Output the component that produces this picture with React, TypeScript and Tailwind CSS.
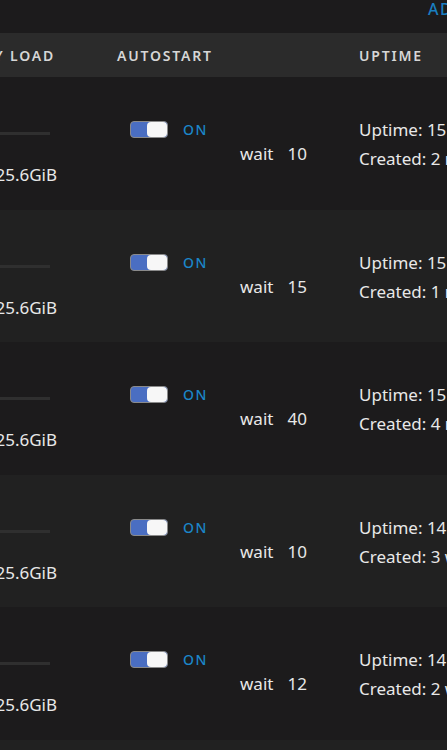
import React from "react";

type Vm = {
  wait: number;
  uptime: string;
  created: string;
};

const vms: Vm[] = [
  { wait: 10, uptime: "15 days 4 hours", created: "2 months ago" },
  { wait: 15, uptime: "15 days 4 hours", created: "1 month ago" },
  { wait: 40, uptime: "15 days 3 hours", created: "4 months ago" },
  { wait: 10, uptime: "14 days 22 hours", created: "3 weeks ago" },
  { wait: 12, uptime: "14 days 21 hours", created: "2 weeks ago" },
];

function Toggle() {
  return (
    <div className="flex h-[17px] w-[38px] items-center rounded-[4px] border border-[#8a8a8a] bg-[#4a6ec2]">
      <div className="ml-auto h-[15px] w-[20px] rounded-[4px] bg-[#f7f7f7]" />
    </div>
  );
}

function Row({ vm, index }: { vm: Vm; index: number }) {
  const bg = index % 2 === 0 ? "bg-[#1c1b1c]" : "bg-[#212121]";
  return (
    <div className={`flex h-[132.5px] ${bg}`}>
      {/* memory load */}
      <div className="w-[117px] shrink-0 pr-[61px]">
        <div className="flex justify-end pt-[55px]">
          <div className="mr-[6px] h-[3px] w-[120px] shrink-0 bg-[#2f2f2f]" />
        </div>
        <div className="mt-[30px] flex justify-end whitespace-nowrap text-[17px] leading-[20px] text-[#e8e8e8]">
          <span className="-mr-[1px]">4.1GiB / 25.6GiB</span>
        </div>
      </div>
      {/* autostart */}
      <div className="flex w-[242px] shrink-0">
        <div className="w-[123px] shrink-0 pl-[13px] pt-[42px]">
          <div className="flex items-center gap-[15px]">
            <Toggle />
            <span className="text-[14px] font-medium tracking-[1.5px] text-[#1b86c9]">
              ON
            </span>
          </div>
        </div>
        <div className="flex pt-[67px] text-[17px] leading-[20px] text-[#e8e8e8]">
          <span>wait</span>
          <span className="ml-[14px]">{vm.wait}</span>
        </div>
      </div>
      {/* uptime */}
      <div className="min-w-0 flex-1 overflow-hidden whitespace-nowrap pt-[38px] text-[17px] leading-[29px] text-[#e8e8e8]">
        <div>Uptime: {vm.uptime}</div>
        <div>Created: {vm.created}</div>
      </div>
    </div>
  );
}

export default function App() {
  return (
    <div
      className="h-[750px] w-[447px] overflow-hidden bg-[#1c1b1c]"
      style={{ fontFamily: '"Noto Sans", "Open Sans", sans-serif' }}
    >
      <div className="h-[33px] overflow-hidden whitespace-nowrap pl-[428px] pt-0 text-[16px] font-medium leading-[18px] tracking-[1.5px] text-[#1a7fc1]">
        ADD VM
      </div>
      <div className="flex h-[44px] items-center bg-[#2b2b2b] text-[14px] font-semibold tracking-[1.8px] text-[#d6d6d6]">
        <div className="flex w-[117px] shrink-0 justify-end whitespace-nowrap pr-[62px]">
          <span>MEMORY LOAD</span>
        </div>
        <div className="w-[242px] shrink-0">AUTOSTART</div>
        <div className="flex-1 whitespace-nowrap">UPTIME</div>
      </div>
      {vms.map((vm, i) => (
        <Row key={i} vm={vm} index={i} />
      ))}
      <div className="h-[20px] bg-[#212121]" />
    </div>
  );
}
